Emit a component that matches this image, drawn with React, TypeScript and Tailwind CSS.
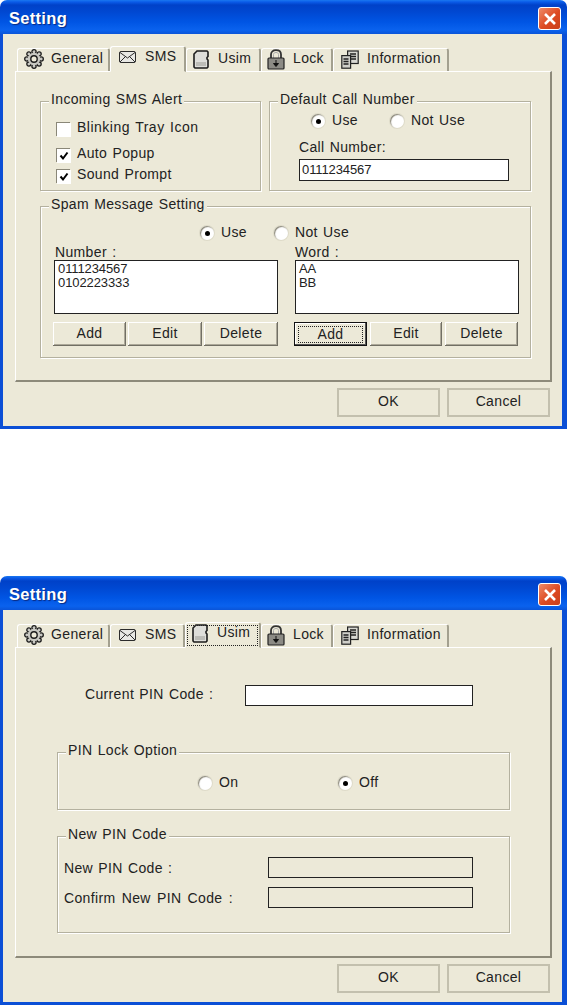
import React from "react";

const font = "[font-family:'Liberation_Sans',Arial,sans-serif]";

function GearIcon() {
  const lobes = [0, 45, 90, 135, 180, 225, 270, 315];
  return (
    <svg width="20" height="20" viewBox="0 0 20 20">
      {lobes.map((a) => (
        <circle
          key={a}
          cx={10 + 7.2 * Math.cos((a * Math.PI) / 180)}
          cy={10 + 7.2 * Math.sin((a * Math.PI) / 180)}
          r="2.1"
          fill="#c9c9c3"
          stroke="#1c1c1c"
          strokeWidth="1.3"
        />
      ))}
      <circle cx="10" cy="10" r="6.2" fill="#c9c9c3" />
      <circle cx="10" cy="10" r="3.2" fill="#ece9d8" stroke="#1c1c1c" strokeWidth="1.4" />
    </svg>
  );
}

function MailIcon() {
  return (
    <svg width="18" height="14" viewBox="0 0 18 14" fill="none" stroke="#2b2b2b" strokeWidth="1">
      <rect x="0.5" y="1.5" width="16" height="11" rx="1.5" fill="#e8e8e4" />
      <path d="M1 2.5 8.5 8 16 2.5M1 12l5.5-5.5M16 12l-5.5-5.5" />
    </svg>
  );
}

function SimIcon() {
  return (
    <svg width="16" height="19" viewBox="0 0 16 19">
      <path d="M4 1H14L15 2V6.5L14 7.5V9L15 10V17L14 18H2L1 17V4Z" fill="#dededa" stroke="#1c1c1c" strokeWidth="1.6" />
      <path d="M3 12H13V16H3Z" fill="#9a9a94" opacity="0.5" />
    </svg>
  );
}

function LockIcon() {
  return (
    <svg width="18" height="21" viewBox="0 0 18 21" fill="none">
      <path d="M4 9V5.5C4 2.8 6 1.2 9 1.2S14 2.8 14 5.5V9" stroke="#333" strokeWidth="1.8" />
      <path d="M6.5 9V5.5C6.5 4.2 7.5 3.5 9 3.5S11.5 4.2 11.5 5.5V9" stroke="#aaa" strokeWidth="1" />
      <rect x="1" y="9" width="16" height="11" rx="1" fill="#8c8b85" stroke="#222" strokeWidth="1.2" />
      <path d="M9 11v4M6.5 14.5h5L9 17.5Z" fill="#111" stroke="#111" />
    </svg>
  );
}

function DocsIcon() {
  return (
    <svg width="18" height="19" viewBox="0 0 18 19" fill="none" stroke="#222" strokeWidth="1.2">
      <rect x="6.6" y="1" width="10.6" height="12.5" fill="#d8d8d2" />
      <path d="M9 4h6M9 6.5h6M9 9h6" strokeWidth="1.4" />
      <rect x="0.8" y="5.6" width="8.8" height="12.6" fill="#cfcfc9" />
      <path d="M2.5 9h5M2.5 11.5h5M2.5 14h5" strokeWidth="1.4" />
    </svg>
  );
}

function Tab({ icon, label, w, pl = "pl-[7px]", active = false, focus = false }: { icon: React.ReactNode; label: string; w: string; pl?: string; active?: boolean; focus?: boolean }) {
  return (
    <div
      className={`${w} ${pl} ${active ? "h-[26px] -mb-px z-10 bg-[#ece9d8] border-b border-b-[#ece9d8] pb-[6px]" : "h-[23px] pb-[4px]"} relative flex items-center gap-[7px] rounded-t-[3px] border-t border-l border-white border-r-2 border-r-[#a3a08f]`}
    >
      {focus ? <span className="absolute left-[1px] right-[1px] top-[2px] bottom-[1px] border border-dotted border-[#222]" /> : null}
      <span className="w-[20px] mt-[2px] flex items-center justify-center shrink-0">{icon}</span>
      <span>{label}</span>
    </div>
  );
}

function Tabs({ active }: { active: "sms" | "usim" }) {
  return (
    <div className="flex items-end h-[26px] pl-[2px] [word-spacing:0px]">
      <Tab w="w-[93px]" pl="pl-[6px]" icon={<GearIcon />} label="General" />
      <Tab w={active === "usim" ? "w-[75px]" : "w-[76px]"} icon={<MailIcon />} label="SMS" active={active === "sms"} />
      <Tab w={active === "usim" ? "w-[76px]" : "w-[75px]"} pl="pl-[4px]" icon={<SimIcon />} label="Usim" active={active === "usim"} focus={active === "usim"} />
      <Tab w="w-[72px]" pl="pl-[4px]" icon={<LockIcon />} label="Lock" />
      <Tab w="w-[116px]" pl="pl-[6px]" icon={<DocsIcon />} label="Information" />
    </div>
  );
}

function Group({ title, className, children }: { title: string; className: string; children: React.ReactNode }) {
  return (
    <div className={`${className} flex flex-col border border-[#b4b19f] shadow-[1px_1px_0_#fff,inset_1px_1px_0_#fff]`}>
      <div className="-mt-[12px] mb-[2px] ml-[8px] w-fit h-[18px] px-[2px] leading-[18px] bg-[#ece9d8]">{title}</div>
      {children}
    </div>
  );
}

function Radio({ on, label }: { on: boolean; label: string }) {
  return (
    <div className="flex items-center gap-[7px] h-[16px]">
      <span className="w-[14px] h-[14px] rounded-full bg-white shadow-[inset_1px_1px_1px_#8a8778,0_0_0_1px_#dedbc9] flex items-center justify-center shrink-0">
        {on ? <span className="w-[5px] h-[5px] rounded-full bg-black" /> : null}
      </span>
      <span className="-mt-[2px]">{label}</span>
    </div>
  );
}

function Check({ on, label, className }: { on: boolean; label: string; className: string }) {
  return (
    <div className={`${className} flex items-center gap-[7px] h-[16px]`}>
      <span className="w-[14px] h-[14px] bg-white border-t border-l border-[#8a8778] shadow-[1px_1px_0_#fff] flex items-center justify-center shrink-0">
        {on ? (
          <svg width="10" height="10" viewBox="0 0 10 10" fill="none" stroke="#000" strokeWidth="2">
            <path d="M1.5 4.5 4 7.5 8.5 1.5" />
          </svg>
        ) : null}
      </span>
      <span className="-mt-[4px]">{label}</span>
    </div>
  );
}

function Btn({ label, w, focus = false }: { label: string; w: string; focus?: boolean }) {
  if (focus) {
    return (
      <div className={`${w} h-[24px] flex border border-[#111] shadow-[inset_-1px_-1px_0_#555,inset_1px_1px_0_#fff]`}>
        <div className="flex-1 m-[3px] mb-[2px] border border-dotted border-[#222] flex items-center justify-center pb-[1px] leading-none">{label}</div>
      </div>
    );
  }
  return (
    <div className={`${w} h-[24px] pb-[2px] flex items-center justify-center shadow-[inset_-1px_-1px_0_#716f64,inset_1px_1px_0_#fff,inset_-2px_-2px_0_#aca899]`}>
      {label}
    </div>
  );
}

function ListBox({ lines }: { lines: string[] }) {
  return (
    <div className="h-[54px] mt-px bg-white border border-[#222] pl-[3px] pt-px leading-[14px] text-[13px] tracking-[-0.1px]">
      {lines.map((l) => (
        <div key={l}>{l}</div>
      ))}
    </div>
  );
}

function Footer() {
  const cls = "w-[103px] h-[29px] pb-[3px] flex items-center justify-center border-2 border-[#c3c0ae]";
  return (
    <div className="flex justify-end gap-[7px] mt-[6px] pr-[12px]">
      <div className={cls}>OK</div>
      <div className={cls}>Cancel</div>
    </div>
  );
}

function Window({ active, children }: { active: "sms" | "usim"; children: React.ReactNode }) {
  return (
    <div className="w-[567px] h-[429px] flex flex-col">
      <div className="h-[34px] shrink-0 rounded-t-[7px] flex items-start justify-between pl-[9px] pr-[6px] bg-[linear-gradient(180deg,#1a78f0_0px,#0a5be8_2px,#0041c8_5px,#0048d2_12px,#0055e4_22px,#0a62ee_30px,#0a54d8_34px)]">
        <span className="mt-[9px] leading-[19px] text-white font-bold text-[16.5px] tracking-[0.3px] [text-shadow:1px_1px_1px_#0a2a80]">Setting</span>
        <span className="mt-[7px] w-[23px] h-[23px] rounded-[3px] border border-white bg-[linear-gradient(135deg,#ef8a68,#dd4a22_55%,#c9401c)] flex items-center justify-center">
          <svg width="14" height="14" viewBox="0 0 14 14" stroke="#fff" strokeWidth="2.6" fill="none">
            <path d="M2 2 12 12M12 2 2 12" />
          </svg>
        </span>
      </div>
      <div className="flex-1 bg-[#ece9d8] border-l-[3px] border-r-[5px] border-b-[3px] border-[#0b4fd6] pt-[11px] pl-[12px]">
        <Tabs active={active} />
        <div className="w-[537px] h-[311px] border-t border-l border-white border-r-2 border-b-2 border-r-[#8d8a7a] border-b-[#8d8a7a]">
          {children}
        </div>
        <Footer />
      </div>
    </div>
  );
}

export default function App() {
  return (
    <div className={`${font} w-[568px] h-[1005px] bg-white flex flex-col gap-[147px] text-[14px] text-[#222] tracking-[0.35px] [word-spacing:1px] overflow-hidden`}>
      <Window active="sms">
        <div className="flex gap-[8px] mt-[29px] ml-[24px]">
          <Group title="Incoming SMS Alert" className="w-[221px] h-[90px]">
            <Check on={false} label="Blinking Tray Icon" className="mt-[11px] ml-[15px] tracking-[0.5px]" />
            <Check on label="Auto Popup" className="mt-[10px] ml-[15px]" />
            <Check on label="Sound Prompt" className="mt-[5px] ml-[15px]" />
          </Group>
          <Group title="Default Call Number" className="w-[262px] h-[90px]">
            <div className="flex mt-[3px] ml-[41px]">
              <div className="w-[79px]">
                <Radio on label="Use" />
              </div>
              <Radio on={false} label="Not Use" />
            </div>
            <div className="ml-[29px] mt-[9px] h-[18px] leading-[18px]">Call Number:</div>
            <div className="ml-[29px] mt-[3px] w-[210px] h-[22px] bg-white border border-[#222] pl-[2px] leading-[20px] text-[13px] tracking-[-0.1px]">0111234567</div>
          </Group>
        </div>
        <Group title="Spam Message Setting" className="w-[491px] h-[152px] mt-[15px] ml-[24px]">
          <div className="flex mt-[10px] ml-[159px]">
            <div className="w-[74px]">
              <Radio on label="Use" />
            </div>
            <Radio on={false} label="Not Use" />
          </div>
          <div className="grid grid-cols-[224px_224px] gap-x-[17px] ml-[13px] mt-[2px]">
            <div>
              <div className="h-[16px] leading-[18px] ml-[1px]">Number :</div>
              <ListBox lines={["0111234567", "0102223333"]} />
              <div className="flex gap-[2px] mt-[8px] -ml-px">
                <Btn w="w-[73px]" label="Add" />
                <Btn w="w-[74px]" label="Edit" />
                <Btn w="w-[74px]" label="Delete" />
              </div>
            </div>
            <div>
              <div className="h-[16px] leading-[18px]">Word :</div>
              <ListBox lines={["AA", "BB"]} />
              <div className="flex gap-[3px] mt-[8px] -ml-px">
                <Btn w="w-[73px]" label="Add" focus />
                <Btn w="w-[72px]" label="Edit" />
                <Btn w="w-[73px]" label="Delete" />
              </div>
            </div>
          </div>
        </Group>
      </Window>
      <Window active="usim">
        <div className="flex items-center mt-[37px] ml-[69px] h-[21px]">
          <div className="w-[160px] pb-[2px]">Current PIN Code :</div>
          <div className="w-[228px] h-[21px] bg-white border border-[#222]" />
        </div>
        <Group title="PIN Lock Option" className="w-[453px] h-[58px] mt-[46px] ml-[41px]">
          <div className="flex mt-[14px] ml-[140px]">
            <div className="w-[140px]">
              <Radio on={false} label="On" />
            </div>
            <Radio on label="Off" />
          </div>
        </Group>
        <Group title="New PIN Code" className="w-[453px] h-[97px] mt-[26px] ml-[41px]">
          <div className="flex items-center mt-[12px] ml-[6px] h-[21px]">
            <div className="w-[204px] pt-[2px]">New PIN Code :</div>
            <div className="w-[205px] h-[21px] border border-[#222]" />
          </div>
          <div className="flex items-center mt-[9px] ml-[6px] h-[21px]">
            <div className="w-[204px] pt-[2px] [word-spacing:2px]">Confirm New PIN Code :</div>
            <div className="w-[205px] h-[21px] border border-[#222]" />
          </div>
        </Group>
      </Window>
    </div>
  );
}
